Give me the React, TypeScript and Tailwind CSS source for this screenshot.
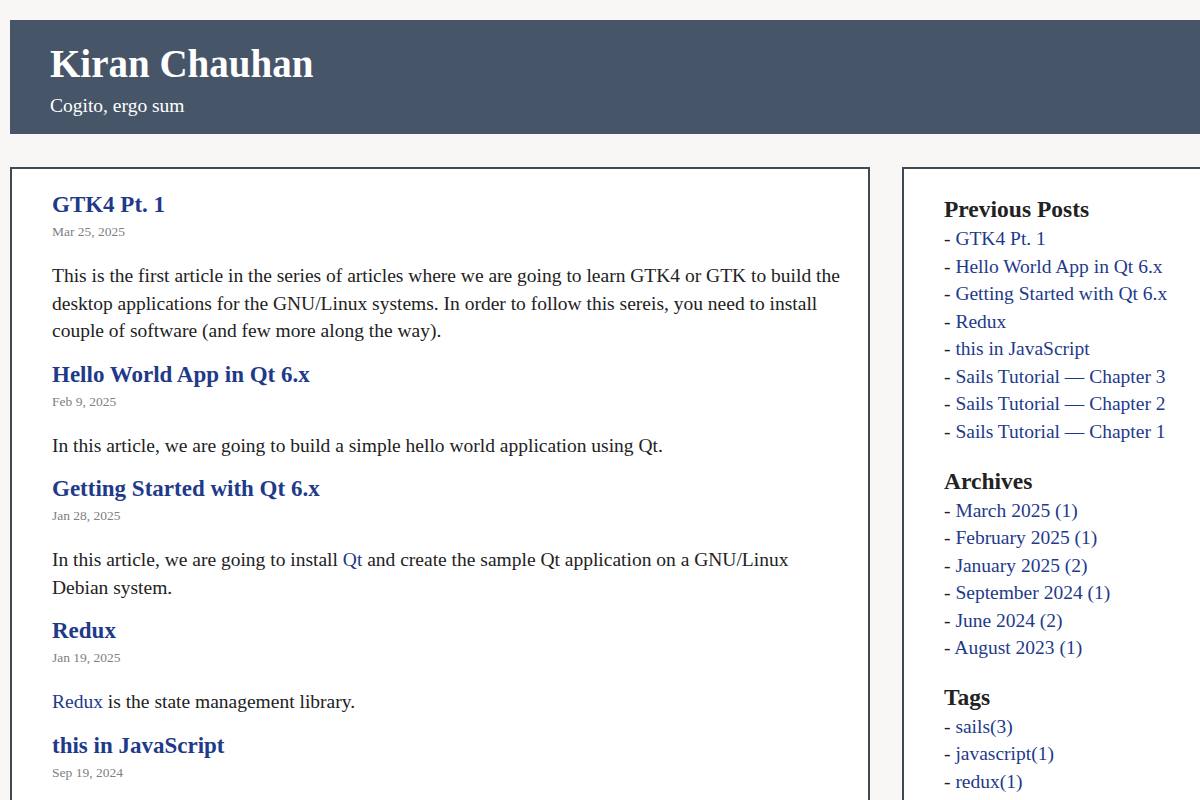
import React from "react";

type Post = {
  title: string;
  date: string;
  body: React.ReactNode;
};

const link = "text-[#1e3a8a]";

const posts: Post[] = [
  {
    title: "GTK4 Pt. 1",
    date: "Mar 25, 2025",
    body: (
      <>
        This is the first article in the series of articles where we are going
        to learn GTK4 or GTK to build the desktop applications for the
        GNU/Linux systems. In order to follow this sereis, you need to install
        couple of software (and few more along the way).
      </>
    ),
  },
  {
    title: "Hello World App in Qt 6.x",
    date: "Feb 9, 2025",
    body: (
      <>
        In this article, we are going to build a simple hello world application
        using Qt.
      </>
    ),
  },
  {
    title: "Getting Started with Qt 6.x",
    date: "Jan 28, 2025",
    body: (
      <>
        In this article, we are going to install <a className={link}>Qt</a> and
        create the sample Qt application on a GNU/Linux Debian system.
      </>
    ),
  },
  {
    title: "Redux",
    date: "Jan 19, 2025",
    body: (
      <>
        <a className={link}>Redux</a> is the state management library.
      </>
    ),
  },
  {
    title: "this in JavaScript",
    date: "Sep 19, 2024",
    body: (
      <>
        In this article, we are going to understand how this keyword works in
        JavaScript.
      </>
    ),
  },
  {
    title: "Sails Tutorial — Chapter 3",
    date: "Jun 12, 2024",
    body: <>In this chapter, we are going to add the models to our app.</>,
  },
];

const previous = [
  "GTK4 Pt. 1",
  "Hello World App in Qt 6.x",
  "Getting Started with Qt 6.x",
  "Redux",
  "this in JavaScript",
  "Sails Tutorial — Chapter 3",
  "Sails Tutorial — Chapter 2",
  "Sails Tutorial — Chapter 1",
];

const archives = [
  "March 2025 (1)",
  "February 2025 (1)",
  "January 2025 (2)",
  "September 2024 (1)",
  "June 2024 (2)",
  "August 2023 (1)",
];

const tags = ["sails(3)", "javascript(1)", "redux(1)", "qt(2)", "gtk(1)"];

function SideList({ title, items }: { title: string; items: string[] }) {
  return (
    <section className="mb-[19px]">
      <h2 className="text-[23.5px] font-bold leading-[32px] text-[#222]">{title}</h2>
      <ul className="text-[19.5px] leading-[27.57px]">
        {items.map((item) => (
          <li key={item} className="whitespace-nowrap text-[#222]">
            - <a className={link}>{item}</a>
          </li>
        ))}
      </ul>
    </section>
  );
}

export default function App() {
  return (
    <div className="min-h-screen overflow-hidden bg-[#f8f7f5] font-['Liberation_Serif',serif] text-[#222]">
      <div className="w-[1240px] pl-[10px] pt-5">
        <header className="h-[114px] bg-[#475569] px-10 pt-[22px] text-white">
          <h1 className="text-[39px] font-bold leading-[44px]">Kiran Chauhan</h1>
          <p className="mt-[8px] text-[19.5px] leading-[24px]">Cogito, ergo sum</p>
        </header>

        <div className="mt-[33px] flex items-start gap-[32px]">
          <main className="w-[860px] border-2 border-[#3f4a57] bg-white pl-10 pr-5 pt-[20px] pb-10">
            {posts.map((post) => (
              <article key={post.title} className="mb-[14px]">
                <h2 className={`text-[23px] font-bold leading-[32px] ${link}`}>
                  {post.title}
                </h2>
                <p className="mt-px text-[13.5px] leading-[20px] text-[#808080]">
                  {post.date}
                </p>
                <p className="mt-[20px] text-[19.5px] leading-[27.5px]">{post.body}</p>
              </article>
            ))}
          </main>

          <aside className="h-[900px] w-[330px] border-2 border-[#3f4a57] bg-white px-10 pt-[24px]">
            <SideList title="Previous Posts" items={previous} />
            <SideList title="Archives" items={archives} />
            <SideList title="Tags" items={tags} />
          </aside>
        </div>
      </div>
    </div>
  );
}
